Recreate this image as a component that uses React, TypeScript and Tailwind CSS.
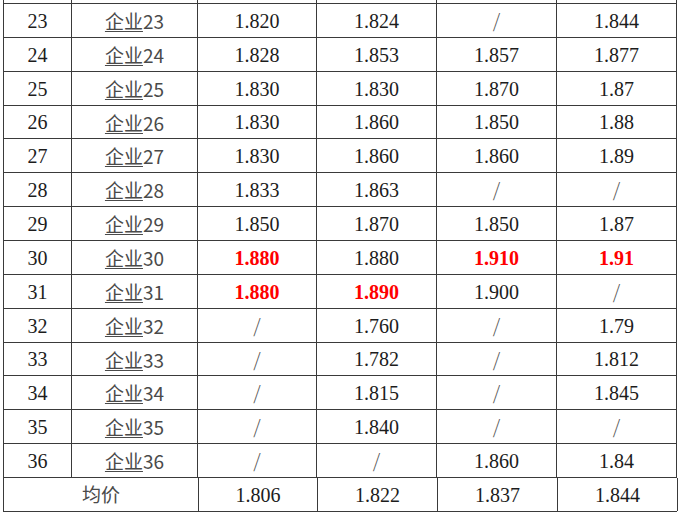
const rows: [string, string[], boolean[]][] = [
  ["23", ["1.820", "1.824", "/", "1.844"], [false, false, false, false]],
  ["24", ["1.828", "1.853", "1.857", "1.877"], [false, false, false, false]],
  ["25", ["1.830", "1.830", "1.870", "1.87"], [false, false, false, false]],
  ["26", ["1.830", "1.860", "1.850", "1.88"], [false, false, false, false]],
  ["27", ["1.830", "1.860", "1.860", "1.89"], [false, false, false, false]],
  ["28", ["1.833", "1.863", "/", "/"], [false, false, false, false]],
  ["29", ["1.850", "1.870", "1.850", "1.87"], [false, false, false, false]],
  ["30", ["1.880", "1.880", "1.910", "1.91"], [true, false, true, true]],
  ["31", ["1.880", "1.890", "1.900", "/"], [true, true, false, false]],
  ["32", ["/", "1.760", "/", "1.79"], [false, false, false, false]],
  ["33", ["/", "1.782", "/", "1.812"], [false, false, false, false]],
  ["34", ["/", "1.815", "/", "1.845"], [false, false, false, false]],
  ["35", ["/", "1.840", "/", "/"], [false, false, false, false]],
  ["36", ["/", "/", "1.860", "1.84"], [false, false, false, false]],
]

// row heights so the rules land on the same pixels as the source
const heights = ["h-[34px]", "h-[34px]", "h-[34px]", "h-[33px]", "h-[34px]", "h-[34px]", "h-[34px]", "h-[34px]", "h-[34px]", "h-[34px]", "h-[33px]", "h-[34px]", "h-[34px]", "h-[34px]"]

const widths = ["w-[68px]", "w-[126px]", "w-[119px]", "w-[120px]", "w-[120px]", "w-[120px]"]

function Num({ children, red }: { children: React.ReactNode; red?: boolean }) {
  return (
    <span className={`font-[Liberation_Serif] text-[20px] ${red ? "font-bold text-[#ff0000]" : "text-[#1c1c1c]"}`}>
      {children}
    </span>
  )
}

function Value({ value, red }: { value: string; red: boolean }) {
  if (value === "/") return <span className="text-[19px] font-light text-[#555]">/</span>
  return <Num red={red}>{value}</Num>
}

function Cell({ width, children }: { width: string; children?: React.ReactNode }) {
  return <div className={`${width} flex shrink-0 items-center justify-center border-r border-[#3a3a3a]`}>{children}</div>
}

export default function App() {
  return (
    <div className="h-[517px] w-[680px] overflow-hidden bg-white font-[Noto_Sans_CJK_SC]">
      <div className="ml-[3px] w-[674px] border-l border-[#3a3a3a]">
        <div className="flex h-[4px] border-b border-[#3a3a3a]">
          {widths.map((w) => (
            <Cell key={w} width={w} />
          ))}
        </div>

        {rows.map(([num, values, reds], i) => (
          <div key={num} className={`flex ${heights[i]} border-b border-[#3a3a3a]`}>
            <Cell width={widths[0]}>
              <Num>{num}</Num>
            </Cell>
            <Cell width={widths[1]}>
              <span className="text-[19px] leading-none text-[#4a4a4a]">
                <span className="underline decoration-[#4a4a4a] decoration-1 underline-offset-[2px]">企业</span>
                {num}
              </span>
            </Cell>
            {values.map((v, j) => (
              <Cell key={j} width={widths[j + 2]}>
                <Value value={v} red={reds[j]} />
              </Cell>
            ))}
          </div>
        ))}

        <div className="flex h-[34px] border-b border-[#3a3a3a]">
          <Cell width="w-[195px]">
            <span className="text-[19px] text-[#4a4a4a]">均价</span>
          </Cell>
          {["1.806", "1.822", "1.837", "1.844"].map((v, j) => (
            <Cell key={v} width={widths[j + 2]}>
              <Value value={v} red={false} />
            </Cell>
          ))}
        </div>
      </div>
    </div>
  )
}
